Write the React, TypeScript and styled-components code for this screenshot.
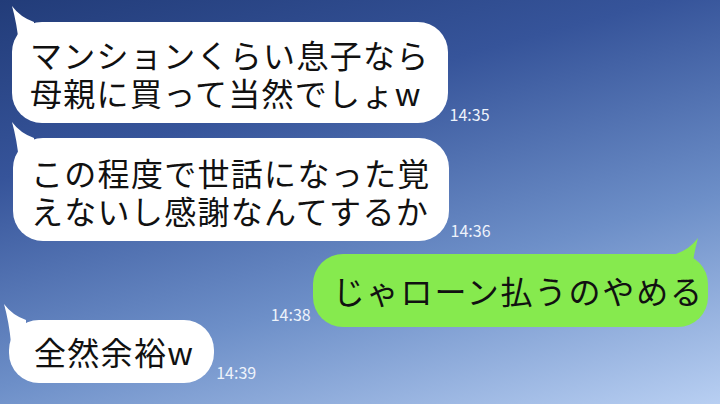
import React from "react";
import styled, { createGlobalStyle } from "styled-components";

const GlobalStyle = createGlobalStyle`
  html, body {
    margin: 0;
    padding: 0;
  }
  body {
    font-family: "Noto Sans CJK JP", "Noto Sans", sans-serif;
  }
`;

const Screen = styled.div`
  width: 720px;
  height: 404px;
  overflow: hidden;
  box-sizing: border-box;
  padding: 22px 12px 0 12px;
  display: flex;
  flex-direction: column;
  background: linear-gradient(165deg, #223c79 0%, #36549a 30%, #6d8fc8 65%, #b8cff2 100%);
`;

const Row = styled.div<{ $right?: boolean; $top?: number; $shift?: number }>`
  display: flex;
  align-items: flex-end;
  justify-content: ${({ $right }) => ($right ? "flex-end" : "flex-start")};
  margin-top: ${({ $top }) => $top ?? 0}px;
  margin-left: ${({ $shift }) => $shift ?? 0}px;
`;

const Bubble = styled.div<{ $mine?: boolean; $pad?: string }>`
  position: relative;
  padding: ${({ $pad }) => $pad ?? "13px 18px 12px"};
  border-radius: 30px;
  background: ${({ $mine }) => ($mine ? "#86ea4e" : "#ffffff")};
  color: #111;
  font-size: 32px;
  line-height: 38px;
  letter-spacing: ${({ $mine }) => ($mine ? "1.9px" : "1.3px")};
  white-space: nowrap;
`;

const Line = styled.div`
  height: 38px;
`;

const Tail = styled.svg<{ $mine?: boolean; $x: number }>`
  position: absolute;
  top: -17px;
  width: 30px;
  height: 40px;
  ${({ $mine, $x }) => ($mine ? `right: ${-$x}px; transform: scaleX(-1);` : `left: ${$x}px;`)}
`;

const Time = styled.div<{ $lift?: number }>`
  font-size: 16px;
  line-height: 16px;
  color: #eef3fb;
  margin: 0 2px ${({ $lift }) => $lift ?? 0}px;
`;

const BubbleTail: React.FC<{ mine?: boolean; x: number; fill: string }> = ({ mine, x, fill }) => (
  <Tail $mine={mine} $x={x} viewBox="0 0 30 40">
    <path d="M1 1 Q 9 12 23 17 L 23 40 L 8 40 Q 6 19 1 1 Z" fill={fill} />
  </Tail>
);

export default function App() {
  return (
    <>
      <GlobalStyle />
      <Screen>
        <Row>
          <Bubble $pad="13px 18px 12px">
            <BubbleTail x={-1} fill="#ffffff" />
            <Line>マンションくらい息子なら</Line>
            <Line>母親に買って当然でしょw</Line>
          </Bubble>
          <Time $lift={1}>14:35</Time>
        </Row>
        <Row $top={15} $shift={1}>
          <Bubble $pad="15px 18px 12px">
            <BubbleTail x={-2} fill="#ffffff" />
            <Line>この程度で世話になった覚</Line>
            <Line>えないし感謝なんてするか</Line>
          </Bubble>
          <Time $lift={3}>14:36</Time>
        </Row>
        <Row $right $top={13}>
          <Time $lift={5}>14:38</Time>
          <Bubble $mine $pad="17px 4px 18px 20px">
            <BubbleTail mine x={-9} fill="#86ea4e" />
            じゃローン払うのやめる
          </Bubble>
        </Row>
        <Row $top={-7} $shift={-3}>
          <Bubble $pad="12px 20px 13px 25px">
            <BubbleTail x={-6} fill="#ffffff" />
            全然余裕w
          </Bubble>
          <Time $lift={3}>14:39</Time>
        </Row>
      </Screen>
    </>
  );
}
